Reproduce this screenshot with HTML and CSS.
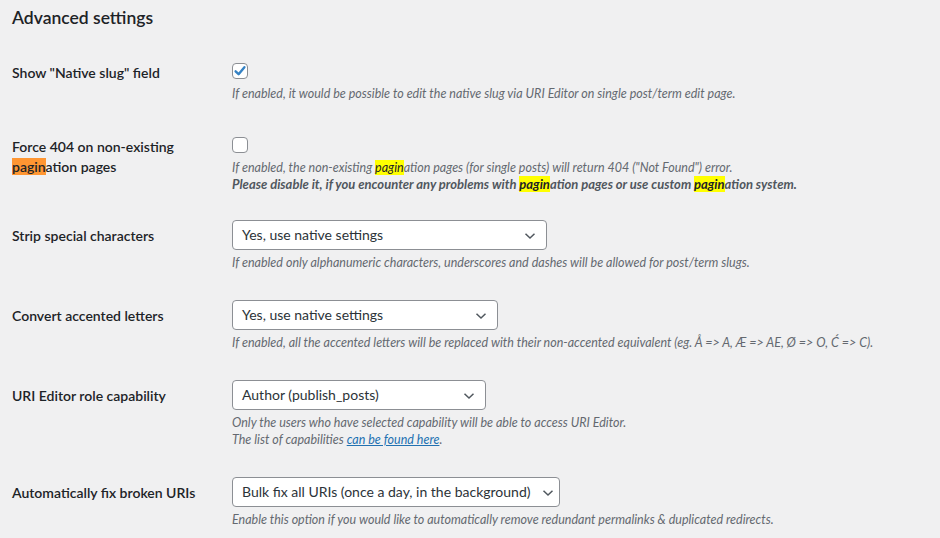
FILE: index.html
```html
<!DOCTYPE html>
<html>
<head>
  <title>Advanced settings</title>
  <link rel="stylesheet" href="styles.css">
</head>
<body>
  <div class="wrap">
    <h2 class="section-title">Advanced settings</h2>

    <div class="row">
      <div class="row-label">Show "Native slug" field</div>
      <div class="row-field">
        <span class="check checked">
          <svg width="14" height="14" viewBox="0 0 14 14"><path d="M2.6 7.3 L5.6 10.2 L11.4 3.2" fill="none" stroke="#3582c4" stroke-width="2.4" stroke-linecap="round" stroke-linejoin="round"/></svg>
        </span>
        <p class="description check-desc">If enabled, it would be possible to edit the native slug via URI Editor on single post/term edit page.</p>
      </div>
    </div>

    <div class="row row-tight">
      <div class="row-label">Force 404 on non-existing <mark class="hl-active">pagin</mark>ation pages</div>
      <div class="row-field">
        <span class="check"></span>
        <p class="description check-desc">If enabled, the non-existing <mark class="hl">pagin</mark>ation pages (for single posts) will return 404 ("Not Found") error.<br>
        <strong>Please disable it, if you encounter any problems with <mark class="hl">pagin</mark>ation pages or use custom <mark class="hl">pagin</mark>ation system.</strong></p>
      </div>
    </div>

    <div class="row">
      <div class="row-label">Strip special characters</div>
      <div class="row-field">
        <div class="select select-strip">
          <span>Yes, use native settings</span>
          <svg class="chevron" width="12" height="8" viewBox="0 0 12 8"><path d="M1.5 1.8 L6 6 L10.5 1.8" fill="none" stroke="#50575e" stroke-width="1.5"/></svg>
        </div>
        <p class="description">If enabled only alphanumeric characters, underscores and dashes will be allowed for post/term slugs.</p>
      </div>
    </div>

    <div class="row">
      <div class="row-label">Convert accented letters</div>
      <div class="row-field">
        <div class="select select-accent">
          <span>Yes, use native settings</span>
          <svg class="chevron" width="12" height="8" viewBox="0 0 12 8"><path d="M1.5 1.8 L6 6 L10.5 1.8" fill="none" stroke="#50575e" stroke-width="1.5"/></svg>
        </div>
        <p class="description">If enabled, all the accented letters will be replaced with their non-accented equivalent (eg. Å =&gt; A, Æ =&gt; AE, Ø =&gt; O, Ć =&gt; C).</p>
      </div>
    </div>

    <div class="row">
      <div class="row-label">URI Editor role capability</div>
      <div class="row-field">
        <div class="select select-role">
          <span>Author (publish_posts)</span>
          <svg class="chevron" width="12" height="8" viewBox="0 0 12 8"><path d="M1.5 1.8 L6 6 L10.5 1.8" fill="none" stroke="#50575e" stroke-width="1.5"/></svg>
        </div>
        <p class="description">Only the users who have selected capability will be able to access URI Editor.<br>
        The list of capabilities <a href="#">can be found here</a>.</p>
      </div>
    </div>

    <div class="row">
      <div class="row-label">Automatically fix broken URIs</div>
      <div class="row-field">
        <div class="select select-fix">
          <span>Bulk fix all URIs (once a day, in the background)</span>
          <svg class="chevron" width="12" height="8" viewBox="0 0 12 8"><path d="M1.5 1.8 L6 6 L10.5 1.8" fill="none" stroke="#50575e" stroke-width="1.5"/></svg>
        </div>
        <p class="description">Enable this option if you would like to automatically remove redundant permalinks &amp; duplicated redirects.</p>
      </div>
    </div>
  </div>
</body>
</html>
```

FILE: styles.css
```css
  body {
    font-family: Lato, "Noto Sans", sans-serif;
    background-color: #f0f0f1;
    color: #1d2327;
    margin: 0;
    padding: 0;
    font-size: 14px;
  }

  .wrap {
    padding: 0 12px;
  }

  .section-title {
    font-size: 17.5px;
    font-weight: 600;
    line-height: 24px;
    margin: 6px 0 14px;
  }

  .row {
    display: flex;
    padding-bottom: 16px;
  }

  .row-tight {
    padding-bottom: 14px;
  }

  .row-label {
    width: 200px;
    flex: none;
    padding: 19px 20px 0 0;
    font-size: 14px;
    font-weight: 600;
    line-height: 20px;
  }

  .row-field {
    padding-top: 13px;
  }

  .check {
    display: block;
    width: 16px;
    height: 16px;
    margin-top: 6px;
    box-sizing: border-box;
    border: 1px solid #8c8f94;
    border-radius: 4px;
    background-color: #fff;
    position: relative;
  }

  .check svg {
    position: absolute;
    left: 0;
    top: 0;
  }

  .description {
    margin: 4px 0 0;
    font-size: 12.5px;
    font-style: italic;
    line-height: 17px;
    color: #646970;
  }

  .check-desc {
    margin-top: 6px;
  }

  .description strong {
    font-size: 13px;
    font-weight: 700;
    color: #50575e;
  }

  .description a {
    color: #2271b1;
  }

  mark.hl {
    background-color: #ffff00;
    color: #1d2327;
  }

  mark.hl-active {
    background-color: #ff9632;
    color: #1d2327;
  }

  .select {
    position: relative;
    height: 30px;
    box-sizing: border-box;
    border: 1px solid #8c8f94;
    border-radius: 4px;
    background-color: #fff;
    color: #2c3338;
    font-size: 14px;
    line-height: 28px;
    padding: 0 24px 0 9px;
    white-space: nowrap;
  }

  .chevron {
    position: absolute;
    right: 10px;
    top: 11px;
  }

  .select-strip { width: 315px; }
  .select-accent { width: 266px; }
  .select-role { width: 254px; }
  .select-fix { width: 328px; padding-right: 20px; }
  .select-fix .chevron { right: 5px; }
```
